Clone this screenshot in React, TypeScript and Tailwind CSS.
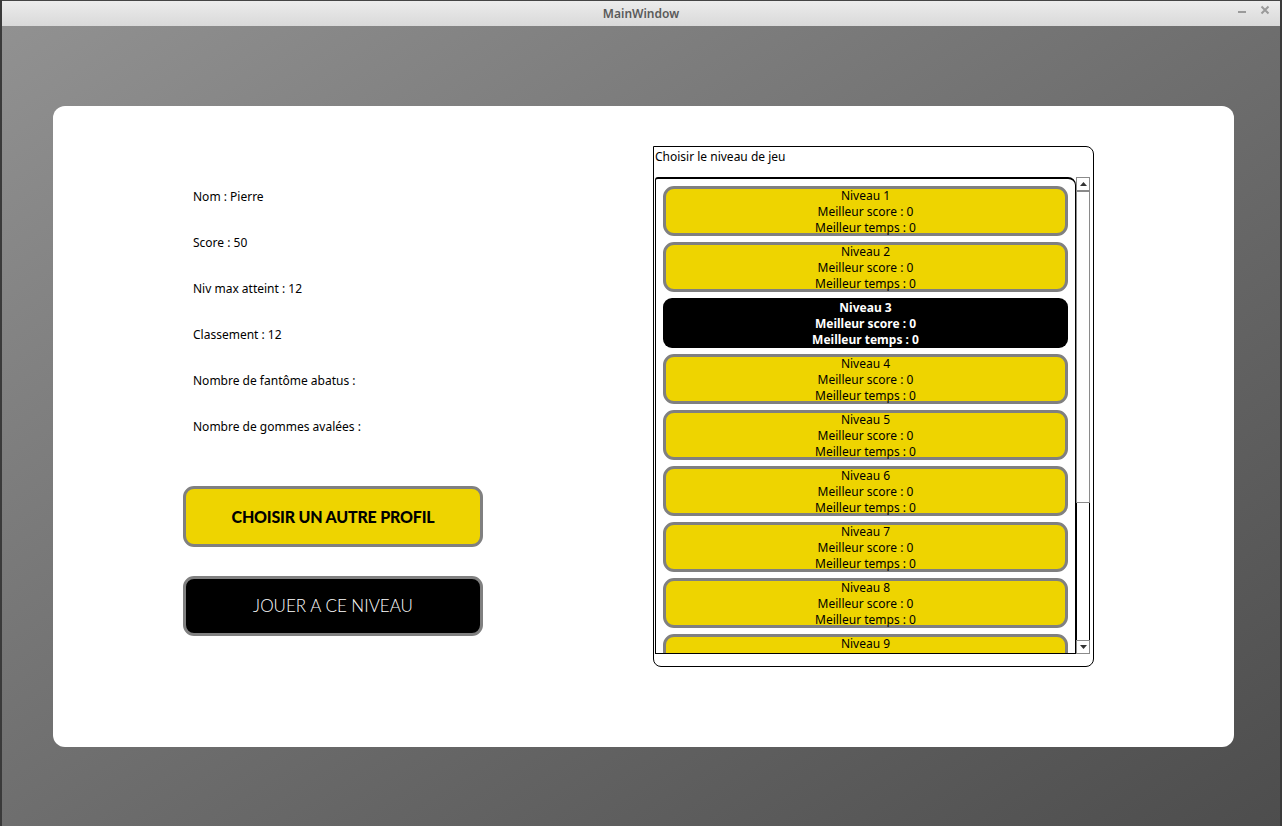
import { useState } from "react";

const levels = [1, 2, 3, 4, 5, 6, 7, 8, 9];

const infos = [
  "Nom : Pierre",
  "Score : 50",
  "Niv max atteint : 12",
  "Classement : 12",
  "Nombre de fantôme abatus :",
  "Nombre de gommes avalées :",
];

const LevelItem = ({ n, active }: { n: number; active: boolean }) => {
  return (
    <div
      className={`w-[405px] h-[50px] shrink-0 flex flex-col items-center justify-center pt-[2px] text-[12px] leading-[16px] ${
        active
          ? "bg-black text-white font-bold rounded-[9px]"
          : "bg-[#eed400] text-black border-[3px] border-[#808080] rounded-[11px]"
      }`}
    >
      <span>Niveau {n}</span>
      <span>Meilleur score : 0</span>
      <span>Meilleur temps : 0</span>
    </div>
  );
};

const App = () => {
  const [selected, setSelected] = useState(3);

  return (
    <div
      className="w-[1282px] h-[826px] flex flex-col overflow-hidden bg-[#3a3a3a] px-[2px]"
      style={{ fontFamily: '"Noto Sans", "DejaVu Sans", sans-serif' }}
    >
      {/* Title bar */}
      <div className="h-[26px] shrink-0 relative flex items-center justify-center bg-gradient-to-b from-[#ececec] to-[#d9d9d9] border-t border-[#444]">
        <span className="text-[12px] font-semibold text-[#5a5a5a]">MainWindow</span>
        <div className="absolute right-[10px] top-[4px] flex items-center gap-[14px]">
          <span className="block w-[8px] h-[2px] bg-[#9a9a9a] mt-[3px]" />
          <svg width="10" height="10" viewBox="0 0 10 10">
            <path d="M1.5 1.5 L8.5 8.5 M8.5 1.5 L1.5 8.5" stroke="#9a9a9a" strokeWidth="2" />
          </svg>
        </div>
      </div>

      {/* Main area */}
      <div className="flex-1 bg-gradient-to-br from-[#919191] to-[#4d4d4d] pt-[80px] pl-[51px]">
        <div className="w-[1181px] h-[641px] bg-white rounded-[12px] flex">
          {/* Left column */}
          <div className="w-[600px] pl-[130px] pt-[82px] flex flex-col">
            <div className="flex flex-col gap-[29px] ml-[10px] text-[12px] leading-[17px] text-black">
              {infos.map((t) => (
                <div key={t}>{t}</div>
              ))}
            </div>
            <button
              className="mt-[51px] w-[300px] h-[61px] bg-[#eed400] border-[3px] border-[#808080] rounded-[11px] text-[16px] font-black text-black tracking-[-0.2px]"
              style={{ fontFamily: '"Lato", "DejaVu Sans", sans-serif' }}
            >
              CHOISIR UN AUTRE PROFIL
            </button>
            <button
              className="mt-[29px] w-[300px] h-[60px] bg-black border-[3px] border-[#808080] rounded-[11px] text-[17px] font-light text-white"
              style={{ fontFamily: '"Lato", "DejaVu Sans", sans-serif' }}
            >
              JOUER A CE NIVEAU
            </button>
          </div>

          {/* Right group box */}
          <div className="pt-[40px]">
            <div className="w-[441px] h-[521px] border border-black rounded-[8px] rounded-tl-none flex flex-col">
              <div className="h-[30px] pl-[1px] pt-[1px] text-[12px] leading-[17px] text-black">
                Choisir le niveau de jeu
              </div>
              <div className="h-[477px] ml-[1px] flex">
                <div className="w-[421px] h-full border-t-2 border-l border-b border-r border-black rounded-tr-[8px] rounded-tl-[3px] overflow-hidden pl-[7px] pt-[7px] flex flex-col gap-[6px]">
                  {levels.map((n) => (
                    <div key={n} onClick={() => setSelected(n)}>
                      <LevelItem n={n} active={n === selected} />
                    </div>
                  ))}
                </div>
                {/* Scrollbar */}
                <div className="w-[14px] h-full flex flex-col">
                  <div className="h-[14px] border border-[#8a8a8a] bg-white flex items-center justify-center">
                    <svg width="7" height="4" viewBox="0 0 7 4">
                      <path d="M0 4 L3.5 0 L7 4 Z" fill="#333" />
                    </svg>
                  </div>
                  <div className="h-[312px] border border-[#8a8a8a] bg-white" />
                  <div className="flex-1 border-l border-r border-black bg-white" />
                  <div className="h-[14px] border border-[#8a8a8a] bg-white flex items-center justify-center">
                    <svg width="7" height="4" viewBox="0 0 7 4">
                      <path d="M0 0 L3.5 4 L7 0 Z" fill="#333" />
                    </svg>
                  </div>
                </div>
              </div>
            </div>
          </div>
        </div>
      </div>
    </div>
  );
};

export default App;
